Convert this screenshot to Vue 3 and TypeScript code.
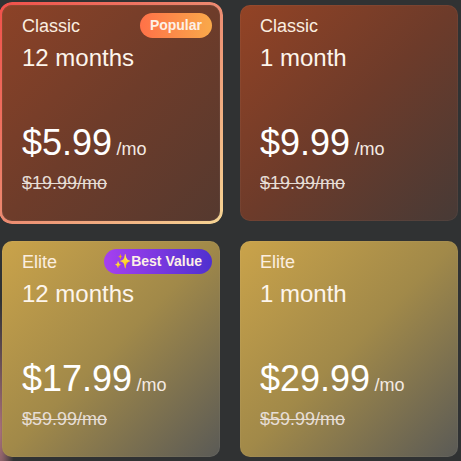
<script setup lang="ts">
interface Plan {
  tier: string
  term: string
  price: string
  old: string
  kind: 'classic' | 'elite'
  selected?: boolean
  badge?: string
  badgeKind?: string
}
const plans: Plan[] = [
  { tier: 'Classic', term: '12 months', price: '$5.99', old: '$19.99/mo', kind: 'classic', selected: true, badge: 'Popular', badgeKind: 'popular' },
  { tier: 'Classic', term: '1 month', price: '$9.99', old: '$19.99/mo', kind: 'classic' },
  { tier: 'Elite', term: '12 months', price: '$17.99', old: '$59.99/mo', kind: 'elite', badge: '✨Best Value', badgeKind: 'best' },
  { tier: 'Elite', term: '1 month', price: '$29.99', old: '$59.99/mo', kind: 'elite' },
]
</script>

<template>
  <div class="page">
    <div class="grid">
      <div v-for="p in plans" :key="p.tier + p.term" class="card" :class="[p.kind, { selected: p.selected }]">
        <span v-if="p.badge" class="badge" :class="p.badgeKind">{{ p.badge }}</span>
        <div class="tier">{{ p.tier }}</div>
        <div class="term">{{ p.term }}</div>
        <div class="price"><span class="amount">{{ p.price }}</span> <span class="per">/mo</span></div>
        <div class="old">{{ p.old }}</div>
      </div>
    </div>
  </div>
</template>

<style scoped>
.page {
  width: 461px;
  height: 461px;
  box-sizing: border-box;
  padding: 5px 3px 4px 2px;
  background: radial-gradient(14px 130px at 0 430px, #a9707a 0%, rgba(169, 112, 122, 0) 100%), #303233;
  overflow: hidden;
  font-family: "Liberation Sans", Arial, sans-serif;
  color: #fff;
}
.grid {
  display: grid;
  grid-template-columns: 218px 218px;
  grid-template-rows: 216px 216px;
  gap: 20px;
}
.card {
  position: relative;
  box-sizing: border-box;
  padding: 10px 20px;
  border-radius: 10px;
  display: flex;
  flex-direction: column;
  box-shadow: inset 0 0 0 1px rgba(255, 255, 255, 0.04);
}
.classic {
  background: linear-gradient(135deg, #934325 0%, #6d3b2a 50%, #473a36 100%);
}
.classic.selected {
  background: linear-gradient(135deg, #8c4227 0%, #6e3c2a 50%, #55392f 100%);
}
.elite {
  background: linear-gradient(135deg, #caa34a 0%, #a18949 50%, #5a5a56 100%);
}
.selected::before {
  content: "";
  position: absolute;
  inset: -3px;
  border-radius: 13px;
  padding: 3px;
  background: linear-gradient(135deg, #f0504a 0%, #ec8a70 50%, #f6d594 100%);
  -webkit-mask: linear-gradient(#000 0 0) content-box exclude, linear-gradient(#000 0 0);
  mask: linear-gradient(#000 0 0) content-box exclude, linear-gradient(#000 0 0);
}
.badge {
  position: absolute;
  top: 8px;
  right: 8px;
  height: 25px;
  padding: 0 10px;
  border-radius: 13px;
  font-size: 14px;
  font-weight: 700;
  line-height: 25px;
  color: #fdf0e6;
}
.popular {
  background: linear-gradient(90deg, #ff7148 0%, #f9a94a 100%);
}
.best {
  background: linear-gradient(90deg, #a640f0 0%, #4f30cf 100%);
}
.tier {
  font-size: 18px;
  line-height: 22px;
  color: #fbeee0;
}
.term {
  margin-top: 7px;
  font-size: 24px;
  line-height: 28px;
  color: #fdf5ec;
}
.price {
  margin-top: 50px;
  line-height: 42px;
  white-space: nowrap;
}
.amount {
  font-size: 36px;
}
.per {
  font-size: 18px;
  color: #f4eae2;
}
.old {
  margin-top: 1px;
  font-size: 18px;
  line-height: 22px;
  text-decoration: line-through;
  color: #e6ddd5;
}
</style>
